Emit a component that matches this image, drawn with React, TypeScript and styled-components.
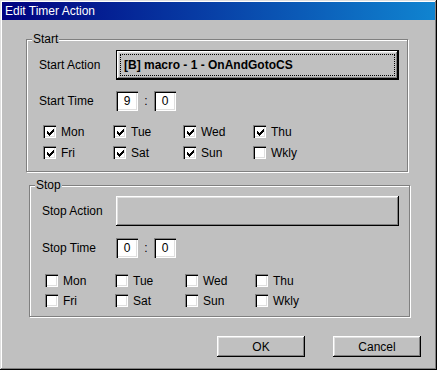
import React from 'react';
import styled, { createGlobalStyle } from 'styled-components';

const GlobalStyle = createGlobalStyle`
  html, body {
    margin: 0;
    padding: 0;
    background: #c0c0c0;
  }
  body {
    font-family: "Liberation Sans", Arial, sans-serif;
    font-size: 12px;
    color: #000;
  }
`;

const Window = styled.div`
  width: 437px;
  height: 370px;
  box-sizing: border-box;
  padding: 2px;
  background: #c0c0c0;
  box-shadow: inset -1px -1px #000, inset 1px 1px #dfdfdf, inset -2px -2px #808080,
    inset 2px 2px #fff;
  display: flex;
  flex-direction: column;
`;

const TitleBar = styled.div`
  height: 18px;
  display: flex;
  align-items: center;
  padding-left: 3px;
  background: linear-gradient(to right, #000080, #1084d0);
  color: #fff;
  font-size: 12px;
`;

const Body = styled.div`
  display: flex;
  flex-direction: column;
  padding-top: 19px;
`;

const GroupBox = styled.div<{ $left: number; $width: number; $height: number; $top?: number }>`
  position: relative;
  box-sizing: border-box;
  margin-left: ${(p) => p.$left}px;
  margin-top: ${(p) => p.$top ?? 0}px;
  width: ${(p) => p.$width}px;
  height: ${(p) => p.$height}px;
  border: 1px solid #808080;
  box-shadow: inset 1px 1px #fff, 1px 1px #fff;
  padding: 10px 0 0 12px;
  display: flex;
  flex-direction: column;
`;

const Legend = styled.span`
  position: absolute;
  top: -8px;
  left: 5px;
  padding: 0 1px 0 1px;
  background: #c0c0c0;
  line-height: 14px;
`;

const FieldRow = styled.div<{ $gap?: number }>`
  display: flex;
  align-items: center;
  margin-top: ${(p) => p.$gap ?? 0}px;
`;

const FieldLabel = styled.span<{ $width: number }>`
  width: ${(p) => p.$width}px;
  flex-shrink: 0;
`;

const ActionButton = styled.div<{ $default?: boolean }>`
  position: relative;
  box-sizing: border-box;
  width: 283px;
  height: 30px;
  display: flex;
  align-items: center;
  padding-left: 7px;
  font-weight: bold;
  background: #c0c0c0;
  ${(p) =>
    p.$default
      ? `border: 1px solid #000;
  box-shadow: inset -1px -1px #000, inset 1px 1px #fff, inset -2px -2px #808080, inset 2px 2px #dfdfdf;
  &::after {
    content: '';
    position: absolute;
    inset: 3px;
    border: 1px dotted #000;
  }`
      : `box-shadow: inset -1px -1px #000, inset 1px 1px #fff, inset -2px -2px #808080, inset 2px 2px #dfdfdf;`}
`;

const TimeBox = styled.div`
  box-sizing: border-box;
  width: 22px;
  height: 20px;
  display: flex;
  align-items: center;
  justify-content: center;
  background: #fff;
  box-shadow: inset 1px 1px #808080, inset 2px 2px #000, inset -1px -1px #fff,
    inset -2px -2px #dfdfdf;
`;

const Colon = styled.span`
  width: 16px;
  text-align: center;
`;

const DayGrid = styled.div<{ $top: number; $left: number; $rowGap: number }>`
  display: grid;
  grid-template-columns: repeat(4, 70px);
  row-gap: ${(p) => p.$rowGap}px;
  margin-top: ${(p) => p.$top}px;
  margin-left: ${(p) => p.$left}px;
`;

const DayItem = styled.label`
  display: flex;
  align-items: center;
  height: 13px;
  gap: 5px;
`;

const Box = styled.span`
  box-sizing: border-box;
  width: 13px;
  height: 13px;
  flex-shrink: 0;
  display: flex;
  align-items: center;
  justify-content: center;
  background: #fff;
  box-shadow: inset 1px 1px #808080, inset 2px 2px #000, inset -1px -1px #fff,
    inset -2px -2px #dfdfdf;

  svg {
    display: block;
    margin: 1px 0 0 1px;
  }
`;

const Footer = styled.div`
  display: flex;
  justify-content: flex-end;
  gap: 28px;
  margin-top: 19px;
  padding-right: 14px;
`;

const PushButton = styled.div`
  box-sizing: border-box;
  width: 88px;
  height: 21px;
  display: flex;
  align-items: center;
  justify-content: center;
  background: #c0c0c0;
  box-shadow: inset -1px -1px #000, inset 1px 1px #fff, inset -2px -2px #808080,
    inset 2px 2px #dfdfdf;
`;

const CheckMark = () => (
  <svg width="7" height="7" viewBox="0 0 7 7" shapeRendering="crispEdges">
    <path
      fill="#000"
      d="M6 0h1v1h-1zM5 1h2v1h-2zM0 2h1v1h-1zM4 2h3v1h-3zM0 3h2v1h-2zM3 3h3v1h-3zM0 4h5v1h-5zM1 5h3v1h-3zM2 6h1v1h-1z"
    />
  </svg>
);

const DAYS = ['Mon', 'Tue', 'Wed', 'Thu', 'Fri', 'Sat', 'Sun', 'Wkly'];

const Day: React.FC<{ name: string; checked: boolean }> = ({ name, checked }) => (
  <DayItem>
    <Box>{checked && <CheckMark />}</Box>
    <span>{name}</span>
  </DayItem>
);

const startChecked = [true, true, true, true, true, true, true, false];

const App: React.FC = () => {
  return (
    <>
      <GlobalStyle />
      <Window>
        <TitleBar>Edit Timer Action</TitleBar>
        <Body>
          <GroupBox $left={24} $width={382} $height={133}>
            <Legend>Start</Legend>
            <FieldRow>
              <FieldLabel $width={77}>Start Action</FieldLabel>
              <ActionButton $default>[B] macro - 1 - OnAndGotoCS</ActionButton>
            </FieldRow>
            <FieldRow $gap={11}>
              <FieldLabel $width={77}>Start Time</FieldLabel>
              <TimeBox>9</TimeBox>
              <Colon>:</Colon>
              <TimeBox>0</TimeBox>
            </FieldRow>
            <DayGrid $top={14} $left={4} $rowGap={8}>
              {DAYS.map((d, i) => (
                <Day key={d} name={d} checked={startChecked[i]} />
              ))}
            </DayGrid>
          </GroupBox>

          <GroupBox $left={27} $width={381} $height={132} $top={13}>
            <Legend>Stop</Legend>
            <FieldRow>
              <FieldLabel $width={74}>Stop Action</FieldLabel>
              <ActionButton />
            </FieldRow>
            <FieldRow $gap={12}>
              <FieldLabel $width={74}>Stop Time</FieldLabel>
              <TimeBox>0</TimeBox>
              <Colon>:</Colon>
              <TimeBox>0</TimeBox>
            </FieldRow>
            <DayGrid $top={16} $left={3} $rowGap={7}>
              {DAYS.map((d) => (
                <Day key={d} name={d} checked={false} />
              ))}
            </DayGrid>
          </GroupBox>

          <Footer>
            <PushButton>OK</PushButton>
            <PushButton>Cancel</PushButton>
          </Footer>
        </Body>
      </Window>
    </>
  );
};

export default App;
